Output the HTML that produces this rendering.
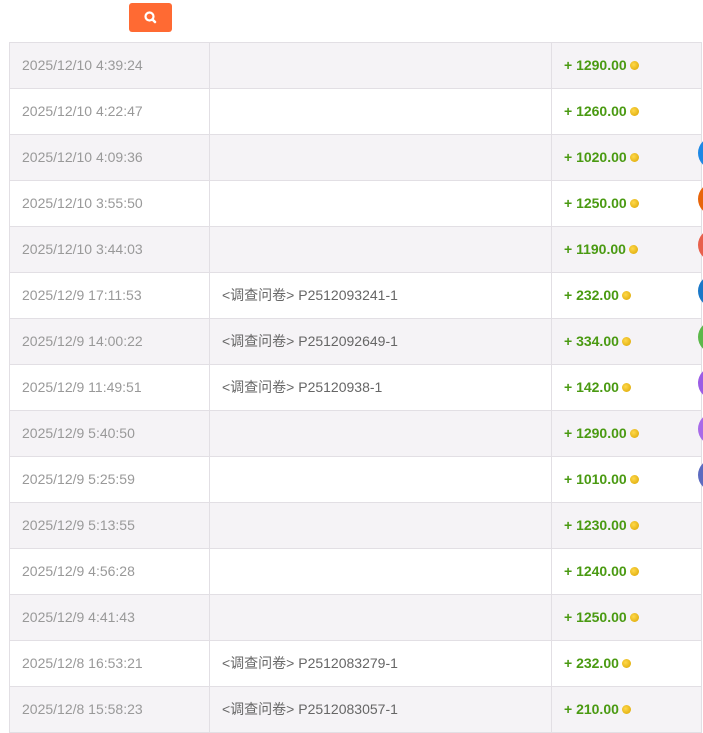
<!DOCTYPE html>
<html><head><meta charset="utf-8"><style>
body{margin:0;width:703px;height:732px;overflow:hidden;background:#fff;font-family:"Liberation Sans","Noto Sans CJK SC",sans-serif;position:relative}
.btn{position:absolute;left:129px;top:3px;width:43px;height:29px;background:#ff6a33;border-radius:3px}
table{position:absolute;left:9px;top:42px;border-collapse:collapse;width:693px}
td{border:1px solid #e2dfe4;height:45px;padding:0 0 2px 12px;box-sizing:border-box;font-size:14px;color:#999}
tr{height:46px}
tr:nth-child(odd) td{background:#f5f3f6}
td.c2{color:#666}
td.c3{color:#4a9a12;font-weight:bold}
.coin{display:inline-block;width:9px;height:9px;border-radius:50%;background:radial-gradient(circle at 40% 40%,#ffd84a,#d9a400);margin-left:3px;vertical-align:0}
.dot{position:absolute;left:698px;width:32px;height:32px;border-radius:50%}
</style></head><body>
<div class="btn"><svg width="43" height="29" viewBox="0 0 43 29"><circle cx="20.5" cy="13.5" r="4" fill="none" stroke="#fff" stroke-width="2.2"/><line x1="23.5" y1="16.5" x2="26" y2="19" stroke="#fff" stroke-width="2.6" stroke-linecap="round"/></svg></div>
<table>
<colgroup><col style="width:200px"><col style="width:342px"><col></colgroup>
<tr><td>2025/12/10 4:39:24</td><td class="c2"></td><td class="c3">+ 1290.00<span class="coin"></span></td></tr>
<tr><td>2025/12/10 4:22:47</td><td class="c2"></td><td class="c3">+ 1260.00<span class="coin"></span></td></tr>
<tr><td>2025/12/10 4:09:36</td><td class="c2"></td><td class="c3">+ 1020.00<span class="coin"></span></td></tr>
<tr><td>2025/12/10 3:55:50</td><td class="c2"></td><td class="c3">+ 1250.00<span class="coin"></span></td></tr>
<tr><td>2025/12/10 3:44:03</td><td class="c2"></td><td class="c3">+ 1190.00<span class="coin"></span></td></tr>
<tr><td>2025/12/9 17:11:53</td><td class="c2">&lt;调查问卷&gt; P2512093241-1</td><td class="c3">+ 232.00<span class="coin"></span></td></tr>
<tr><td>2025/12/9 14:00:22</td><td class="c2">&lt;调查问卷&gt; P2512092649-1</td><td class="c3">+ 334.00<span class="coin"></span></td></tr>
<tr><td>2025/12/9 11:49:51</td><td class="c2">&lt;调查问卷&gt; P25120938-1</td><td class="c3">+ 142.00<span class="coin"></span></td></tr>
<tr><td>2025/12/9 5:40:50</td><td class="c2"></td><td class="c3">+ 1290.00<span class="coin"></span></td></tr>
<tr><td>2025/12/9 5:25:59</td><td class="c2"></td><td class="c3">+ 1010.00<span class="coin"></span></td></tr>
<tr><td>2025/12/9 5:13:55</td><td class="c2"></td><td class="c3">+ 1230.00<span class="coin"></span></td></tr>
<tr><td>2025/12/9 4:56:28</td><td class="c2"></td><td class="c3">+ 1240.00<span class="coin"></span></td></tr>
<tr><td>2025/12/9 4:41:43</td><td class="c2"></td><td class="c3">+ 1250.00<span class="coin"></span></td></tr>
<tr><td>2025/12/8 16:53:21</td><td class="c2">&lt;调查问卷&gt; P2512083279-1</td><td class="c3">+ 232.00<span class="coin"></span></td></tr>
<tr><td>2025/12/8 15:58:23</td><td class="c2">&lt;调查问卷&gt; P2512083057-1</td><td class="c3">+ 210.00<span class="coin"></span></td></tr>
</table>
<div class="dot" style="top:137px;background:#1e88e5"></div>
<div class="dot" style="top:183px;background:#e8650a"></div>
<div class="dot" style="top:229px;background:#e8604c"></div>
<div class="dot" style="top:275px;background:#1a78c8"></div>
<div class="dot" style="top:321px;background:#5cb84a"></div>
<div class="dot" style="top:367px;background:#9b5de5"></div>
<div class="dot" style="top:413px;background:#a86ae8"></div>
<div class="dot" style="top:459px;background:#5c6bc0"></div>
</body></html>
